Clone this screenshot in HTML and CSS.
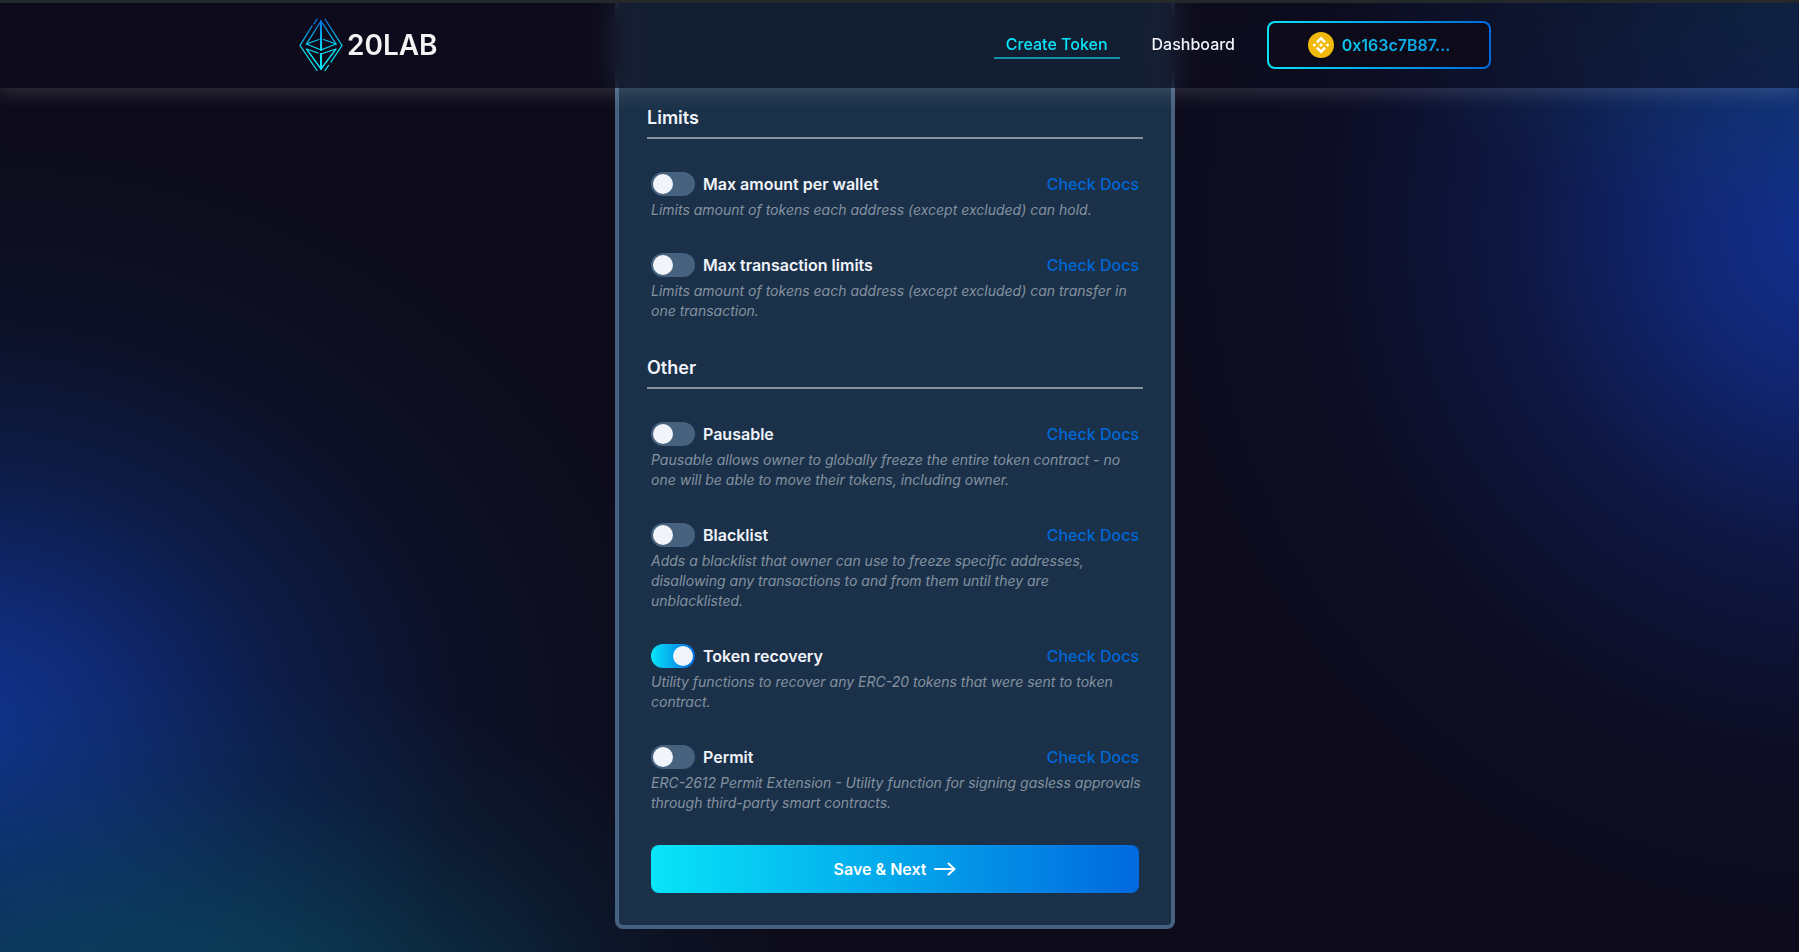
FILE: index.html
```html
<!DOCTYPE html>
<html lang="en">
<head>
    <meta charset="UTF-8">
    <meta name="viewport" content="width=device-width, initial-scale=1.0">
    <title>20LAB - Create Token</title>
    <link rel="stylesheet" href="styles.css">
</head>
<body>
    <header class="header">
        <div class="header-inner">
            <a href="#" class="logo">
                <svg class="logo-icon" viewBox="0 0 44 54" fill="none" stroke="url(#logo-grad)" stroke-width="1.3" stroke-linecap="round" stroke-linejoin="round">
                    <defs>
                        <linearGradient id="logo-grad" gradientUnits="userSpaceOnUse" x1="22" y1="0" x2="22" y2="54">
                            <stop offset="0" stop-color="#0669df"/>
                            <stop offset="0.6" stop-color="#08e4f8"/>
                        </linearGradient>
                    </defs>
                    <path d="M18 1l-3 5M13 8L1 27.500l17 25M26 1l17 26.500L32 44M29.500 47.500L26 52.500"/>
                    <path d="M22 3L7.500 26l14.500 6 15-6z"/>
                    <path d="M21.900 3L22.100 32" stroke-width="2"/>
                    <path d="M7.500 26L20 21.500M37 26l-12.500-4.500"/>
                    <path d="M19 35L7.500 31 22 51l15-20-15 5"/>
                    <path d="M21.900 36L22.100 51" stroke-width="2"/>
                </svg>
                <span class="logo-text">20LAB</span>
            </a>
            <nav class="nav">
                <a href="#" class="nav-link active">Create Token</a>
                <a href="#" class="nav-link">Dashboard</a>
                <button type="button" class="wallet-btn">
                    <svg class="bnb-icon" viewBox="0 0 26 26">
                        <circle cx="13" cy="13" r="13" fill="#f0b90b"/>
                        <g fill="#fff">
                            <path d="M13 4.500l5 5-1.800 1.800L13 8.100l-3.200 3.200L8 9.500z"/>
                            <path d="M13 21.500l-5-5 1.800-1.800 3.200 3.200 3.200-3.200 1.800 1.800z"/>
                            <path d="M4.600 13l1.800-1.800L8.200 13l-1.800 1.800zM17.800 13l1.800-1.800 1.800 1.800-1.800 1.800zM11 13l2-2 2 2-2 2z"/>
                        </g>
                    </svg>
                    <span class="wallet-address">0x163c7B87...</span>
                </button>
            </nav>
        </div>
    </header>

    <main class="main">
        <form class="card">
            <h2 class="section-title">Limits</h2>

            <div class="option">
                <div class="option-row">
                    <input type="checkbox" class="switch" id="max-wallet">
                    <label for="max-wallet">Max amount per wallet</label>
                    <a href="#" class="docs-link">Check Docs</a>
                </div>
                <p class="option-text">Limits amount of tokens each address (except excluded) can hold.</p>
            </div>

            <div class="option">
                <div class="option-row">
                    <input type="checkbox" class="switch" id="max-tx">
                    <label for="max-tx">Max transaction limits</label>
                    <a href="#" class="docs-link">Check Docs</a>
                </div>
                <p class="option-text">Limits amount of tokens each address (except excluded) can transfer in one transaction.</p>
            </div>

            <h2 class="section-title">Other</h2>

            <div class="option">
                <div class="option-row">
                    <input type="checkbox" class="switch" id="pausable">
                    <label for="pausable">Pausable</label>
                    <a href="#" class="docs-link">Check Docs</a>
                </div>
                <p class="option-text">Pausable allows owner to globally freeze the entire token contract - no one will be able to move their tokens, including owner.</p>
            </div>

            <div class="option">
                <div class="option-row">
                    <input type="checkbox" class="switch" id="blacklist">
                    <label for="blacklist">Blacklist</label>
                    <a href="#" class="docs-link">Check Docs</a>
                </div>
                <p class="option-text">Adds a blacklist that owner can use to freeze specific addresses, disallowing any transactions to and from them until they are unblacklisted.</p>
            </div>

            <div class="option">
                <div class="option-row">
                    <input type="checkbox" class="switch" id="recovery" checked>
                    <label for="recovery">Token recovery</label>
                    <a href="#" class="docs-link">Check Docs</a>
                </div>
                <p class="option-text">Utility functions to recover any ERC-20 tokens that were sent to token contract.</p>
            </div>

            <div class="option">
                <div class="option-row">
                    <input type="checkbox" class="switch" id="permit">
                    <label for="permit">Permit</label>
                    <a href="#" class="docs-link">Check Docs</a>
                </div>
                <p class="option-text">ERC-2612 Permit Extension - Utility function for signing gasless approvals through third-party smart contracts.</p>
            </div>

            <button type="button" class="save-btn">
                Save &amp; Next
                <svg class="arrow" viewBox="0 0 22 14" fill="none" stroke="#fff" stroke-width="2" stroke-linecap="round" stroke-linejoin="round">
                    <path d="M1 7h19M14.500 1.500L20.500 7l-6 5.500"/>
                </svg>
            </button>
        </form>
    </main>
</body>
</html>
```

FILE: styles.css
```css
:root {
    --bg: #0d0b1a;
    --card: #1b3149;
    --border: #46627f;
    --cyan: #08e4f8;
    --blue: #0069de;
    --white: #f1f4fa;
    --muted: #8492a0;
    --gradient: linear-gradient(90deg, var(--cyan), var(--blue));
}

* {
    margin: 0;
    padding: 0;
    box-sizing: border-box;
}

body {
    min-height: 100vh;
    padding-right: 9px;
    font-family: Inter, sans-serif;
    color: var(--white);
    background:
        radial-gradient(ellipse 36% 42% at 10% 112%, rgba(10, 78, 106, 0.8), rgba(10, 76, 100, 0.6) 35%, rgba(10, 60, 86, 0.22) 72%, transparent),
        radial-gradient(ellipse 42% 66% at -2% 77%, rgba(17, 54, 152, 0.95), rgba(16, 50, 142, 0.78) 20%, rgba(13, 44, 116, 0.5) 42%, rgba(12, 36, 80, 0.2) 68%, transparent),
        radial-gradient(ellipse 28% 28% at 102% -4%, rgba(14, 90, 112, 0.5), rgba(14, 80, 104, 0.25) 45%, transparent),
        radial-gradient(ellipse 42% 82% at 102% 24%, rgba(18, 50, 150, 0.95), rgba(18, 46, 140, 0.78) 20%, rgba(16, 38, 116, 0.46) 42%, rgba(14, 28, 90, 0.16) 68%, transparent),
        var(--bg);
}

/* Header */
.header {
    position: fixed;
    top: 0;
    left: 0;
    right: 0;
    z-index: 10;
    padding-right: 9px;
    border-top: 3px solid #23282b;
    background: rgba(13, 12, 27, 0.5);
    backdrop-filter: blur(12px);
    box-shadow: 0 0 20px 4px rgba(255, 255, 255, 0.16);
}

.header-inner {
    max-width: 1232px;
    height: 85px;
    margin: 0 auto;
    padding: 0 20px 2px;
    display: flex;
    align-items: center;
    justify-content: space-between;
}

.logo {
    display: flex;
    align-items: center;
    gap: 4px;
    text-decoration: none;
}

.logo-icon {
    width: 44px;
    height: 54px;
}

.logo-text {
    font-size: 28px;
    font-weight: 600;
    color: #f3f3f3;
}

.nav {
    display: flex;
    align-items: center;
    gap: 20px;
}

.nav-link {
    padding: 0 12px;
    font-size: 16px;
    font-weight: 500;
    line-height: 26px;
    color: var(--white);
    text-decoration: none;
    border-bottom: 2px solid transparent;
}

.nav-link.active {
    color: var(--cyan);
    border-color: #1194a9;
}

.wallet-btn {
    width: 224px;
    height: 48px;
    display: flex;
    align-items: center;
    justify-content: center;
    gap: 8px;
    border: 2px solid transparent;
    border-radius: 8px;
    background: linear-gradient(var(--bg), var(--bg)) padding-box, var(--gradient) border-box;
    font-family: Inter, sans-serif;
    font-size: 16px;
    font-weight: 600;
    cursor: pointer;
}

.bnb-icon {
    width: 26px;
    height: 26px;
}

.wallet-address {
    background: linear-gradient(90deg, #0cc8ef, #0a9cec);
    -webkit-background-clip: text;
    background-clip: text;
    color: transparent;
}

/* Card */
.main {
    display: flex;
    justify-content: center;
    padding: 0 12px 20px;
}

.card {
    width: 100%;
    max-width: 560px;
    padding: 104px 28px 32px;
    background: var(--card);
    border: 4px solid var(--border);
    border-top: none;
    border-radius: 0 0 8px 8px;
}

.section-title {
    margin-bottom: 33px;
    padding-bottom: 5px;
    font-size: 18px;
    font-weight: 600;
    line-height: 28px;
    border-bottom: 2px solid #84929f;
}

.option {
    margin-bottom: 33px;
    padding: 0 4px;
}

.option:has(+ .save-btn) {
    margin-bottom: 32px;
}

.option-row {
    display: flex;
    align-items: center;
    gap: 8px;
    height: 24px;
    margin-bottom: 4px;
    font-size: 16px;
    font-weight: 600;
}

.docs-link {
    margin-left: auto;
    font-weight: 500;
    color: #0067d6;
    text-decoration: none;
}

.option-text {
    margin-right: -4px;
    font-size: 14px;
    font-style: italic;
    font-weight: 400;
    line-height: 20px;
    color: var(--muted);
}

.switch {
    appearance: none;
    display: flex;
    width: 44px;
    height: 24px;
    padding: 2px;
    border-radius: 12px;
    background: var(--border);
    cursor: pointer;
}

.switch::before {
    content: "";
    width: 20px;
    height: 20px;
    border-radius: 50%;
    background: var(--white);
}

.switch:checked {
    justify-content: flex-end;
    background: var(--gradient);
}

.save-btn {
    display: flex;
    align-items: center;
    justify-content: center;
    gap: 8px;
    width: calc(100% - 8px);
    height: 48px;
    margin: 0 4px;
    border: none;
    border-radius: 8px;
    background: var(--gradient);
    color: #fff;
    font-family: Inter, sans-serif;
    font-size: 16px;
    font-weight: 600;
    cursor: pointer;
}

.arrow {
    width: 22px;
    height: 14px;
}
```
